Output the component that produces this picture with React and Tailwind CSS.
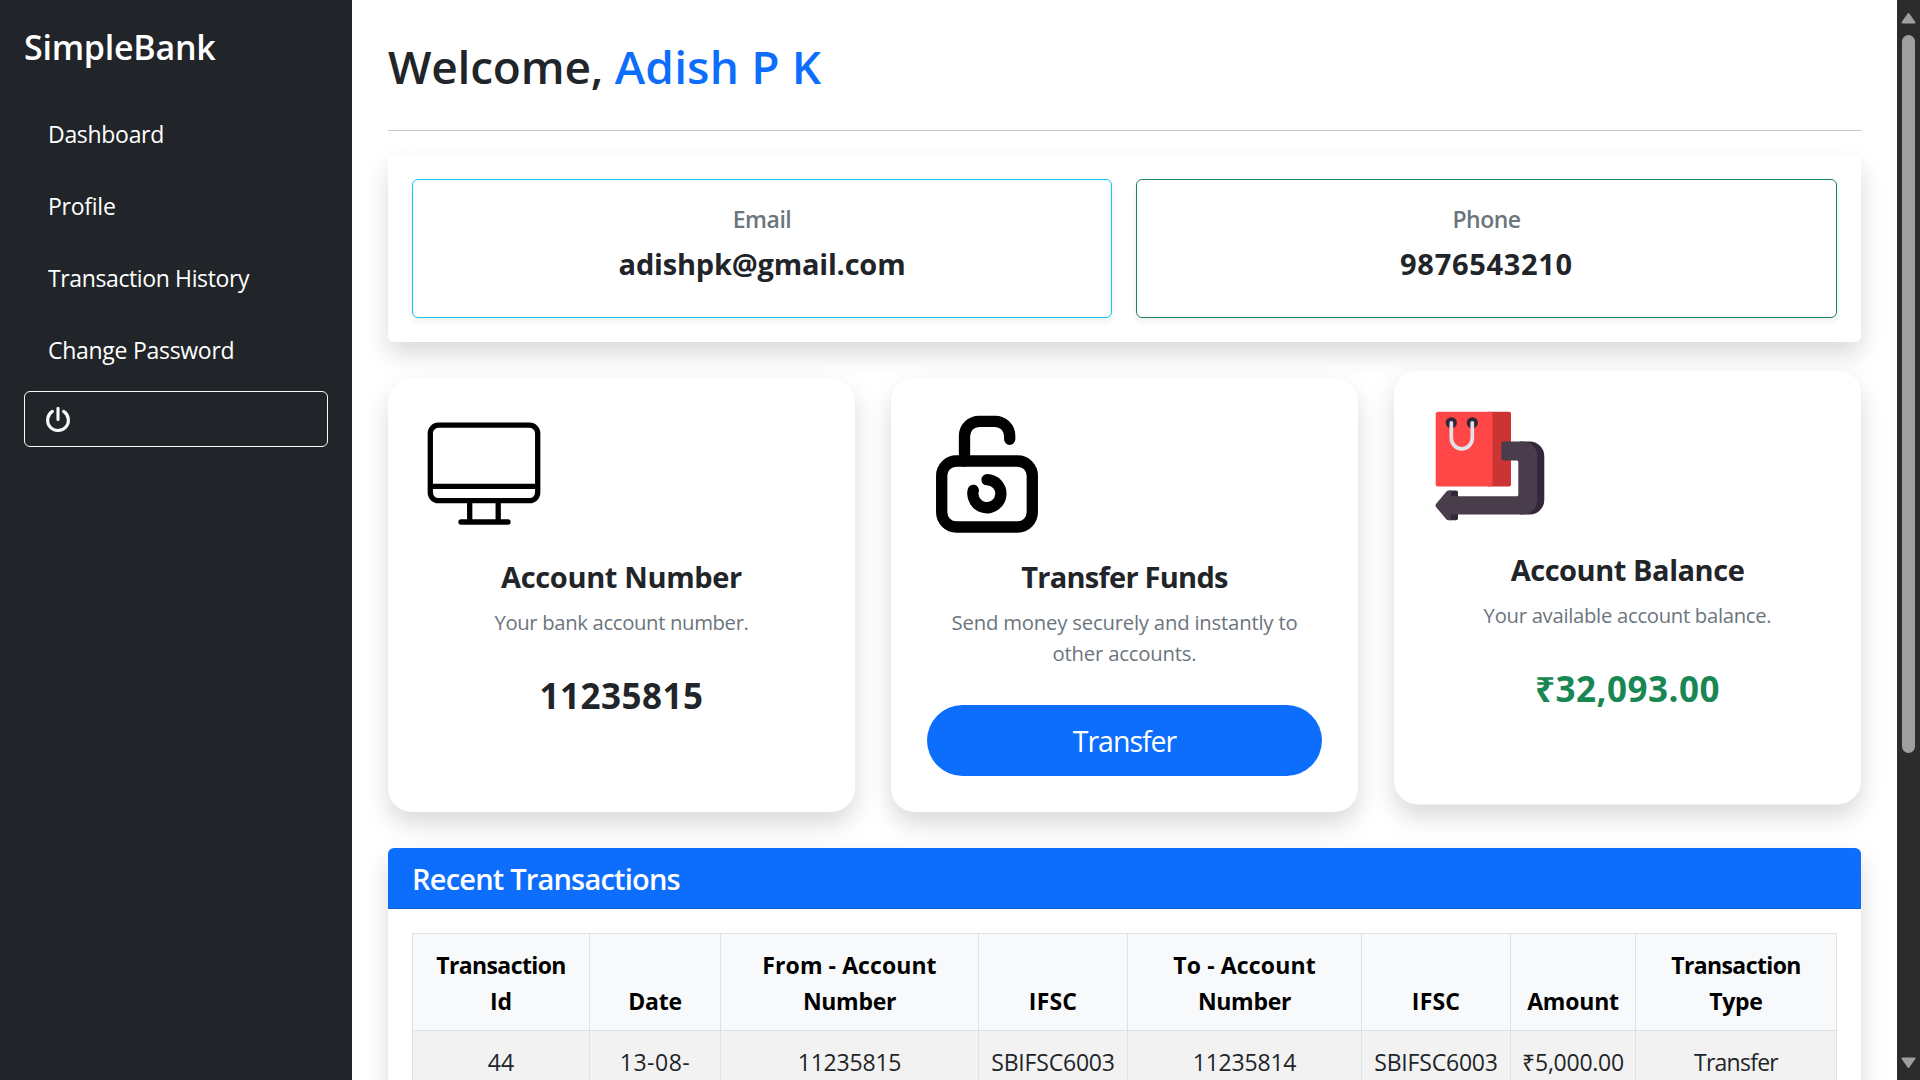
import React from "react";

function MonitorIcon() {
  return (
    <svg width="120" height="120" viewBox="0 0 120 120" fill="none" stroke="#000" strokeWidth="5.3" className="block">
      <rect x="6.3" y="11.2" width="107.4" height="75.4" rx="8" />
      <path d="M6.3 72.3H113.7M45.7 86.4V108M74.2 86.4V108" />
      <path d="M37 108H84" strokeLinecap="round" />
    </svg>
  );
}

function LockIcon() {
  return (
    <svg width="120" height="120" viewBox="0 0 120 120" fill="none" stroke="#000" strokeWidth="11.3" strokeLinecap="round" className="block">
      <rect x="14.7" y="47" width="90.6" height="66" rx="14.7" />
      <path d="M37.5 47V22A14.7 14.7 0 0 1 52.2 7.3H68A14.7 14.7 0 0 1 82.7 22V25.3" />
      <path d="M60 65.7A14 14 0 1 1 46.3 76.3" />
    </svg>
  );
}

function BagReturnIcon() {
  return (
    <svg width="120" height="120" viewBox="0 0 120 120" className="block">
      <path d="M58 5.3H79a2 2 0 0 1 2 2V78a2 2 0 0 1-2 2H58z" fill="#cc3333" />
      <rect x="5.7" y="5.3" width="56.8" height="74.7" rx="2.5" fill="#ff4747" />
      <circle cx="21.3" cy="16.3" r="5.6" fill="#32283c" />
      <circle cx="42.3" cy="16.3" r="5.6" fill="#32283c" />
      <path d="M21.3 16.3V31.5a10.5 10.8 0 0 0 21 0V16.3" fill="none" stroke="#e6e1e8" strokeWidth="3.7" strokeLinecap="round" />
      <path d="M94 35H99.5A14.8 14.8 0 0 1 114.3 49.8V93.2A14.8 14.8 0 0 1 99.5 108H90V35z" fill="#32283c" />
      <path d="M19.5 84H26a2 2 0 0 1 2 2V111.7a2 2 0 0 1-2 2H19.5z" fill="#32283c" />
      <path d="M73.8 35H92.5A14.8 14.8 0 0 1 107.3 49.8V93.2A14.8 14.8 0 0 1 92.5 108H21V113.7H18.5a3 3 0 0 1-2.2-1L6.4 101a3 3 0 0 1 0-4L16.3 85.2a3 3 0 0 1 2.2-1.2H21V89.7H86.8a1.5 1.5 0 0 0 1.5-1.5V55.5A1.5 1.5 0 0 0 86.8 54H73.8a2.5 2.5 0 0 1-2.5-2.5V37.5A2.5 2.5 0 0 1 73.8 35z" fill="#493c4b" />
    </svg>
  );
}

function PowerIcon() {
  return (
    <svg width="28" height="28" viewBox="0 0 28 28" fill="none" stroke="#f8f9fa" strokeWidth="3.1" strokeLinecap="round" className="block">
      <path d="M14 3.2V14.5M8.4 6.4A10.4 10.4 0 1 0 19.6 6.4" />
    </svg>
  );
}

const nav = [
  { label: "Dashboard", cls: "tracking-[-0.3px]" },
  { label: "Profile", cls: "tracking-[-0.25px]" },
  { label: "Transaction History", cls: "tracking-[-0.38px]" },
  { label: "Change Password", cls: "tracking-[-0.28px]" },
];

const CARD = "flex h-[434px] flex-1 flex-col rounded-[24px] bg-white p-9 shadow-[0_12px_24px_rgba(0,0,0,0.15)]";
const TITLE = "mt-[25px] text-center text-[29px] leading-[36px] font-bold whitespace-nowrap";
const DESC = "mt-[12px] text-center text-[20.3px] leading-[31px] text-[#6c757d]";
const VALUE = "mt-[36px] text-center text-[35px] leading-[44px] font-bold tracking-[0.5px]";

const columns = [
  { w: "w-[177px]", lines: [["Transaction", "tracking-[-0.6px]"], ["Id", ""]], cell: "44", cls: "" },
  { w: "w-[131px]", lines: [["Date", "tracking-[-0.2px]"]], cell: "13-08-", cls: "tracking-[0.5px]" },
  { w: "w-[258px]", lines: [["From - Account", "tracking-[0.08px]"], ["Number", "tracking-[-0.3px]"]], cell: "11235815", cls: "tracking-[-0.2px]" },
  { w: "w-[149px]", lines: [["IFSC", "tracking-[0.2px]"]], cell: "SBIFSC6003", cls: "tracking-[-0.2px]" },
  { w: "w-[234px]", lines: [["To - Account", "tracking-[0.15px]"], ["Number", "tracking-[-0.3px]"]], cell: "11235814", cls: "tracking-[-0.2px]" },
  { w: "w-[149px]", lines: [["IFSC", "tracking-[0.2px]"]], cell: "SBIFSC6003", cls: "tracking-[-0.2px]" },
  { w: "w-[125px]", lines: [["Amount", "tracking-[-0.2px]"]], cell: "₹5,000.00", cls: "tracking-[-0.25px]" },
  { w: "w-[201px]", lines: [["Transaction", "tracking-[-0.6px]"], ["Type", "tracking-[-0.3px]"]], cell: "Transfer", cls: "tracking-[-0.75px]" },
];

export default function App() {
  return (
    <div className="flex h-[1080px] w-[1920px] overflow-hidden bg-white font-['Open_Sans','Noto_Sans',sans-serif] text-[23px] text-[#212529]">
      <aside className="w-[352px] shrink-0 bg-[#212529] px-6 pt-[26px] text-white">
        <h4 className="text-[34px] leading-[43px] font-semibold tracking-[-0.25px]">SimpleBank</h4>
        <nav className="mt-[29px] flex flex-col">
          {nav.map((n) => (
            <a key={n.label} className={"flex h-[72px] items-center px-6 whitespace-nowrap " + n.cls}>
              {n.label}
            </a>
          ))}
        </nav>
        <button className="mt-[5px] flex h-14 w-[304px] items-center rounded-[6px] border border-[#f8f9fa] pl-[19px]">
          <PowerIcon />
        </button>
      </aside>

      <main className="w-[1545px] shrink-0 px-9 pt-9">
        <h2 className="h-[95px] border-b border-[#c7c8c9] pt-[1px] text-[46px] leading-[58px] font-semibold tracking-[-0.2px] whitespace-nowrap">
          Welcome, <span className="tracking-[0.15px] text-[#0d6efd]">Adish P K</span>
        </h2>

        <section className="mt-6 flex h-[187px] gap-6 rounded-[6px] bg-white p-6 shadow-[0_12px_24px_rgba(0,0,0,0.15)]">
          <div className="w-[700px] shrink-0 rounded-[6px] border border-[#0dcaf0] pt-[21px] text-center shadow-[0_3px_6px_rgba(0,0,0,0.075)]">
            <div className="leading-[36px] font-semibold tracking-[-0.5px] text-[#6c757d]">Email</div>
            <div className="mt-[9px] text-[29px] leading-[36px] font-bold tracking-[-0.2px]">adishpk@gmail.com</div>
          </div>
          <div className="flex-1 rounded-[6px] border border-[#198754] pt-[21px] text-center shadow-[0_3px_6px_rgba(0,0,0,0.075)]">
            <div className="leading-[36px] font-semibold tracking-[-0.5px] text-[#6c757d]">Phone</div>
            <div className="mt-[9px] text-[29px] leading-[36px] font-bold tracking-[0.7px]">9876543210</div>
          </div>
        </section>

        <section className="mt-9 flex gap-9">
          <article className={CARD}>
            <MonitorIcon />
            <h5 className={TITLE + " tracking-[-0.35px]"}>Account Number</h5>
            <p className={DESC + " tracking-[-0.35px]"}>Your bank account number.</p>
            <div className={VALUE}>11235815</div>
          </article>
          <article className={CARD}>
            <LockIcon />
            <h5 className={TITLE + " tracking-[-0.75px]"}>Transfer Funds</h5>
            <p className={DESC + " tracking-[-0.2px]"}>
              Send money securely and instantly to
              <br />
              other accounts.
            </p>
            <button className="mt-auto h-[71px] w-full rounded-full bg-[#0d6efd] pt-[2px] text-[28.5px] tracking-[-1px] text-white">Transfer</button>
          </article>
          <article className={CARD + " -translate-y-[7.5px]"}>
            <BagReturnIcon />
            <h5 className={TITLE + " tracking-[-0.45px]"}>Account Balance</h5>
            <p className={DESC + " tracking-[-0.3px]"}>Your available account balance.</p>
            <div className={VALUE + " text-[#198754]"}>₹32,093.00</div>
          </article>
        </section>

        <section className="mt-9 h-[400px] rounded-[6px] bg-white shadow-[0_12px_24px_rgba(0,0,0,0.15)]">
          <h5 className="h-[61px] rounded-t-[6px] border-b border-[#0c63e4] bg-[#0d6efd] px-6 pt-[13px] text-[29px] leading-[36px] font-semibold tracking-[-0.8px] text-white">
            Recent Transactions
          </h5>
          <div className="px-6 pt-6">
            <table className="w-[1425px] table-fixed border-collapse text-center">
              <thead>
                <tr className="h-[97px] bg-[#f8f9fa] text-black">
                  {columns.map((c, i) => (
                    <th key={i} className={"border border-[#dee2e6] p-0 pb-[11px] align-bottom leading-[36px] font-bold " + c.w}>
                      {c.lines.map(([text, cls]) => (
                        <div key={text} className={"whitespace-nowrap " + cls}>{text}</div>
                      ))}
                    </th>
                  ))}
                </tr>
              </thead>
              <tbody>
                <tr className="h-[97px] bg-[#f2f2f2]">
                  {columns.map((c, i) => (
                    <td key={i} className={"border border-[#dee2e6] p-0 pt-[13px] align-top leading-[36px] whitespace-nowrap " + c.cls}>
                      {c.cell}
                    </td>
                  ))}
                </tr>
              </tbody>
            </table>
          </div>
        </section>
      </main>

      <div className="flex w-[23px] shrink-0 flex-col items-center bg-[#2c2c2c] pt-[12px]">
        <svg width="15" height="12" viewBox="0 0 15 12" fill="#9f9f9f" stroke="#9f9f9f" strokeWidth="2" strokeLinejoin="round">
          <path d="M7.5 2L13.5 10.5H1.5z" />
        </svg>
        <div className="mt-[11px] h-[718px] w-[13px] rounded-full bg-[#9f9f9f]" />
        <svg width="15" height="12" viewBox="0 0 15 12" fill="#9f9f9f" stroke="#9f9f9f" strokeWidth="2" strokeLinejoin="round" className="mt-[304px]">
          <path d="M1.5 1.5H13.5L7.5 10z" />
        </svg>
      </div>
    </div>
  );
}
